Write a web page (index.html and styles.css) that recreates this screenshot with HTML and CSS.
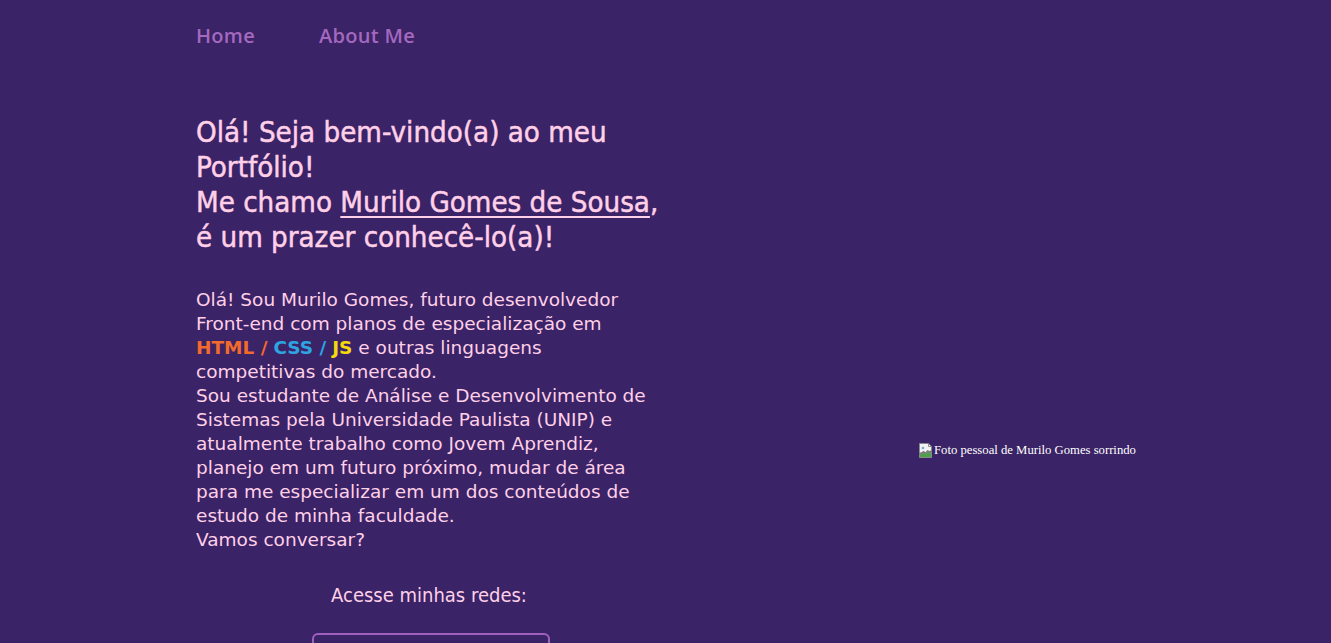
FILE: index.html
```html
<!DOCTYPE html>
<html lang="pt-BR">
<head>
<meta charset="utf-8">
<title>Portfólio - Murilo Gomes</title>
<link rel="stylesheet" href="styles.css">
</head>
<body>
<header class="top">
  <nav class="nav">
    <a class="nav-link" href="#">Home</a>
    <a class="nav-link" href="#">About Me</a>
  </nav>
</header>
<main class="main">
  <section class="intro">
    <h1 class="title">Olá! Seja bem-vindo(a) ao meu Portfólio!<br>Me chamo <a class="name" href="#">Murilo Gomes de Sousa</a>, é um prazer conhecê-lo(a)!</h1>
    <p class="text">Olá! Sou Murilo Gomes, futuro desenvolvedor Front-end com planos de especialização em <span class="html">HTML /</span> <span class="css">CSS /</span> <span class="js">JS</span> e outras linguagens competitivas do mercado.<br>Sou estudante de Análise e Desenvolvimento de Sistemas pela Universidade Paulista (UNIP) e atualmente trabalho como Jovem Aprendiz, planejo em um futuro próximo, mudar de área para me especializar em um dos conteúdos de estudo de minha faculdade.<br>Vamos conversar?</p>
    <div class="social">
      <h2 class="social-title">Acesse minhas redes:</h2>
      <a class="social-btn" href="#">Instagram</a>
      <a class="social-btn" href="#">GitHub</a>
    </div>
  </section>
  <figure class="photo">
    <span class="broken"><svg class="broken-icon" width="16" height="16" viewBox="0 0 16 16"><path d="M1.5 1.5h9l3 3v4l-2 1-2-1-2 2-2-1-4 2z" fill="#f2f2f2" stroke="#8a8a8a"/><path d="M10.5 1.5v3h3" fill="none" stroke="#8a8a8a"/><path d="M1.5 12.5l4-2 2 1 2-2 2 1 2-1v6h-12z" fill="#4ea14a" stroke="#8a8a8a"/><circle cx="5" cy="6" r="1.3" fill="#7aa7d6"/></svg>Foto pessoal de Murilo Gomes sorrindo</span>
  </figure>
</main>
</body>
</html>
```
FILE: styles.css
```css
* { box-sizing: border-box; }
html, body { margin: 0; padding: 0; }
body {
  background: #3a2366;
  font-family: "DejaVu Sans", sans-serif;
  color: #ffd0e8;
}
.top { padding: 24px 0 0 196px; }
.nav { display: flex; gap: 64px; }
.nav-link {
  color: #a568bf;
  text-decoration: none;
  font-family: "Open Sans", sans-serif;
  font-weight: 600;
  font-size: 20px;
  letter-spacing: 0.3px;
  line-height: 24px;
}
.main {
  display: flex;
  align-items: center;
  padding-left: 196px;
  margin-top: 67px;
}
.intro { width: 466px; flex: none; padding-bottom: 34px; }
.title {
  margin: 0;
  font-family: "DejaVu Sans Condensed", "DejaVu Sans", sans-serif;
  font-weight: 400;
  font-size: 29.2px;
  line-height: 35px;
  color: #ffd0e8;
  -webkit-text-stroke: 0.5px #ffd0e8;
}
.name { color: #ffd0e8; text-decoration: underline; text-underline-offset: 4px; text-decoration-thickness: 2px; }
.text {
  margin: 33px 0 0;
  font-size: 18.5px;
  line-height: 24px;
  color: #ffd0e8;
}
.html { color: #f26a2c; font-weight: 700; }
.css { color: #2ea5e0; font-weight: 700; }
.js { color: #f5d90f; font-weight: 700; }
.social { display: flex; flex-direction: column; align-items: center; margin-top: 30px; }
.social-title {
  margin: 0;
  font-family: "DejaVu Sans Condensed", "DejaVu Sans", sans-serif;
  font-weight: 400;
  font-size: 20px;
  line-height: 26px;
  color: #ffd0e8;
}
.social-btn {
  display: block;
  width: 238px;
  margin-top: 25px;
  margin-left: 3px;
  padding: 14px 0;
  border: 2px solid #a060c0;
  border-radius: 6px;
  text-align: center;
  color: #ffd0e8;
  text-decoration: none;
  font-size: 18px;
}
.social-btn + .social-btn { margin-top: 16px; }
.photo { margin: 0 0 0 256px; }
.broken {
  display: inline-flex;
  align-items: center;
  font-family: "Liberation Serif", serif;
  font-size: 12.7px;
  color: #ffffff;
}
.broken-icon { flex: none; }
```
